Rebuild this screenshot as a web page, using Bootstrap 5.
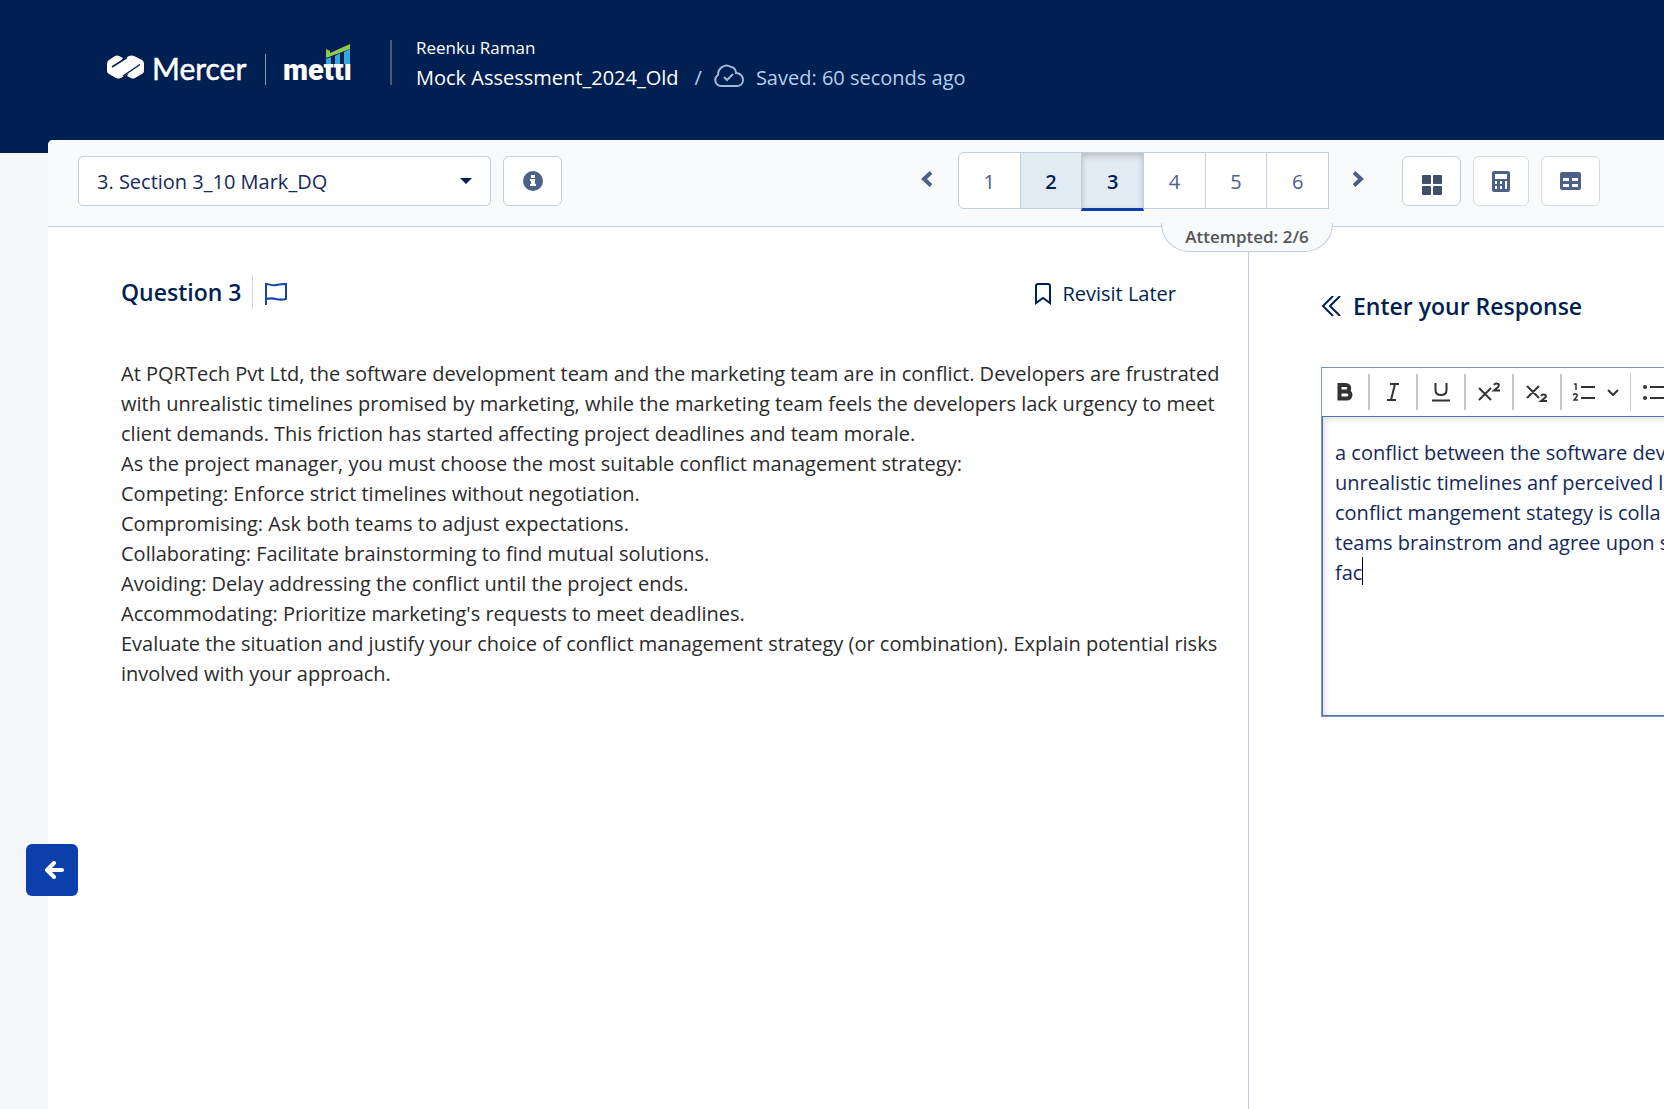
<!DOCTYPE html>
<html lang="en">
<head>
<meta charset="utf-8">
<meta name="viewport" content="width=device-width, initial-scale=1">
<title>Mock Assessment_2024_Old</title>
<link href="https://cdn.jsdelivr.net/npm/bootstrap@5.3.0/dist/css/bootstrap.min.css" rel="stylesheet">
<style>
  :root { --navy: #001f52; --line: #c0cedd; --slate: #4d6088; --royal: #0b3fab; }
  body { font-family: "Open Sans", "Noto Sans", sans-serif; font-size: 20px; line-height: 30px; color: var(--navy); background: #f4f6f8; overflow-x: hidden; }
  svg { display: block; flex: none; }
  .top-bar { background: var(--navy); height: 153px; padding: 36px 0 0 107px; }
  .brand-name { font-family: Lato, sans-serif; }
  .top-rule { width: 2px; height: 45px; background: #4a5873; margin: 4px 24px 0 37px; }
  .candidate { font-size: 17px; line-height: 24px; }
  .test-line { font-size: 20px; line-height: 30px; margin-top: 3px; }
  .pale { color: #b3cfee; }
  .sheet { margin: -13px 0 0 48px; min-height: calc(100vh - 140px); background: #fff; border-top-left-radius: 5px; position: relative; }
  .tool-row { height: 87px; padding: 12px 64px 0 30px; background: #f8fafc; border-bottom: 1px solid var(--line); border-top-left-radius: 5px; }
  .section-pick { appearance: none; width: 413px; height: 50px; margin: 4px 12px 0 0; padding: 2px 18px 0; font-size: 20px; color: #16295b; border: 1px solid var(--line); border-radius: 5px;
    background: #fff url("data:image/svg+xml,%3Csvg xmlns='http://www.w3.org/2000/svg' viewBox='0 0 12 6'%3E%3Cpath fill='%23001f52' d='M0 0h12L6 6z'/%3E%3C/svg%3E") no-repeat right 18px center / 12px 6px; }
  .tool-btn { width: 59px; height: 50px; margin-top: 4px; background: #fff; border: 1px solid #d5dbe3; border-radius: 6px; display: flex; align-items: center; justify-content: center; padding: 0; }
  .tool-btn.strong-line { border-color: var(--line); }
  .tool-btn.slim { width: 56px; }
  .step-btn { padding: 0; border: 0; height: 16px; margin-top: 19px; }
  .pager { width: 371px; margin: 0 24px 0 26px; height: 57px; }
  .pager .btn { --bs-btn-border-color: var(--line); --bs-btn-border-radius: 6px; flex: 1 1 0; padding: 2px 0 0; font-size: 20px; font-weight: 500; color: var(--slate); background: #fff; }
  .pager .btn.done { background: #e1ebf2; color: var(--navy); font-weight: 600; }
  .pager .btn.current { background: #e3ebf3; color: var(--navy); height: 59px; font-weight: 600; border-bottom: 3px solid var(--royal); box-shadow: inset 0 3px 6px #0003; }
  .tool-set { padding-left: 14px; }
  .tally { position: absolute; top: 71px; right: -4px; width: 172px; height: 29px; border: 1px solid var(--line); border-top: 0; border-radius: 0 0 28px 28px; background: #f8fafc; color: #555; font-size: 17px; font-weight: 600; line-height: 27px; text-align: center; z-index: 5; }
  .pane-question { padding: 48px 16px 0 73px; min-height: calc(100vh - 227px); border-right: 1px solid var(--line); }
  .pane-answer { flex: 0 0 415px; padding: 62px 0 0 72px; overflow: hidden; }
  .heading { font-size: 23px; font-weight: 600; line-height: 34px; margin: 0; }
  .head-rule { width: 1px; height: 34px; background: #d5d8dd; margin: 0 12px 0 11px; }
  .text-btn { font-size: 20px; line-height: 30px; color: var(--navy); padding: 4px 0 0; border: 0; }
  .revisit { margin-right: 56px; }
  .prompt { color: #2b2b2b; margin-top: 50px; }
  .prompt p { margin: 0; }
  .editor { width: 640px; margin-top: 44px; border: 1px solid #7f93b8; }
  .editor-tools { height: 48px; }
  .editor-tools button { height: 36px; width: 48px; padding: 0; border: 0; border-right: 2px solid #c8c8c8; background: none; display: flex; align-items: center; justify-content: center; color: #333; }
  .editor-tools button.wide { width: 69px; border-right-width: 1px; justify-content: flex-start; padding-left: 11px; }
  .editor textarea { display: block; width: 100%; height: 300px; padding: 21px 12px; border: 1px solid #4a76bb; outline: 0; resize: none; overflow: hidden; white-space: pre; font-size: 20px; line-height: 30px; color: #14295a; box-shadow: inset 2px 2px 6px #0002; }
  .caret { position: absolute; left: 40px; top: 141px; width: 1px; height: 28px; background: #000; }
  .back-btn { position: absolute; left: -22px; top: 704px; width: 52px; height: 52px; padding: 0 0 0 4px; border: 0; border-radius: 6px; background: var(--royal); display: flex; align-items: center; justify-content: center; }
</style>
<script src="https://cdn.jsdelivr.net/npm/bootstrap@5.3.0/dist/js/bootstrap.bundle.min.js"></script>
</head>
<body>
<header class="top-bar d-flex align-items-start text-white">
  <svg width="246" height="50" viewBox="0 0 246 50" role="img" aria-label="Mercer Mettl">
    <path fill="#fff" d="M0 28q0-3 2-4l6-4q2-1 4 0l4 2-2 3 8-5q3-1 5 0l8 4q2 1 2 4v7q0 2-2 3l-7 4q-2 1-4 0l-4-2 2-3-8 5q-3 1-5 0l-7-4q-2-1-2-3z"/>
    <path stroke="#001f52" stroke-width="1.500" fill="none" d="M5 31L20 21.500M16 40L33 28.500"/>
    <text class="brand-name" x="45" y="44" font-size="30" fill="#fff" stroke="#fff" stroke-width=".5">Mercer</text>
    <path stroke="#8796b4" d="M158.500 18v31"/>
    <text x="176" y="44" font-size="29" font-weight="900" fill="#fff" font-family="Roboto">mettl</text>
    <path fill="#001f52" d="M218 8h28v20h-28z"/>
    <path fill="#35a7df" d="M219 23l5-2v7h-5zM228 20l5-3v11h-5zM237 16l6-3v15h-6z"/>
    <path fill="#94c94f" d="M219 13l4 2v2l20-9v5l-24 9z"/>
  </svg>
  <div class="top-rule"></div>
  <div>
    <div class="candidate">Reenku Raman</div>
    <div class="test-line d-flex align-items-center">
      <span>Mock Assessment_2024_Old</span>
      <span class="pale ms-3 me-2">/</span>
      <svg class="ms-1 mb-1" width="30" height="24" viewBox="0 0 30 24" fill="none" stroke="#a3b7d3" stroke-width="2"><path d="M7 22a6 6 0 0 1-3-11C4 4 11-1 17 3c3 0 5 3 5 6 4 0 7 3 7 7s-3 6-6 6z"/><path d="M10 13l3 3 6-6"/></svg>
      <span class="pale ms-2 ps-1">Saved: 60 seconds ago</span>
    </div>
  </div>
</header>

<main class="sheet">
  <div class="tool-row d-flex align-items-start">
    <select class="section-pick" aria-label="Section"><option>3. Section 3_10 Mark_DQ</option></select>
    <button class="tool-btn strong-line" type="button" aria-label="Section information">
      <svg width="20" height="20" viewBox="0 0 20 20"><circle cx="10" cy="10" r="10" fill="#4d6088"/><path fill="#fff" d="M8 4h4v3H8zM7 8h5v5h1v2H7v-2h1v-3H7z"/></svg>
    </button>
    <nav class="d-flex ms-auto align-items-start position-relative" aria-label="Questions">
      <button class="btn step-btn" type="button" aria-label="Previous question"><svg width="11" height="16" viewBox="0 0 11 16" fill="none" stroke="#4d6088" stroke-width="4"><path d="M10 1.500L3 8l7 6.500"/></svg></button>
      <div class="pager btn-group position-relative">
        <button class="btn" type="button">1</button>
        <button class="btn done" type="button">2</button>
        <button class="btn current" type="button" aria-current="true">3</button>
        <button class="btn" type="button">4</button>
        <button class="btn" type="button">5</button>
        <button class="btn" type="button">6</button>
        <div class="tally">Attempted: 2/6</div>
      </div>
      <button class="btn step-btn" type="button" aria-label="Next question"><svg width="11" height="16" viewBox="0 0 11 16" fill="none" stroke="#4d6088" stroke-width="4"><path d="M1 1.500L8 8l-7 6.500"/></svg></button>
    </nav>
    <div class="tool-set d-flex gap-2 ms-4">
      <button class="tool-btn strong-line pt-2" type="button" aria-label="All questions"><svg width="20" height="20" viewBox="0 0 20 20" fill="#3e5068"><rect width="9" height="9" rx="1"/><rect x="11" width="9" height="9" rx="1"/><rect y="11" width="9" height="9" rx="1"/><rect x="11" y="11" width="9" height="9" rx="1"/></svg></button>
      <button class="tool-btn slim ms-1" type="button" aria-label="Calculator"><svg width="18" height="21" viewBox="0 0 18 21"><rect width="18" height="21" rx="2" fill="#4d6088"/><path fill="#fff" d="M3 3h12v5H3zM3 10h2v3H3zM8 10h2v3H8zM13 10h2v8h-2zM3 15h2v3H3zM8 15h2v3H8z"/></svg></button>
      <button class="tool-btn ms-1" type="button" aria-label="Spreadsheet"><svg width="21" height="18" viewBox="0 0 21 18"><rect width="21" height="18" rx="2" fill="#4d6088"/><path fill="#fff" d="M3 6h6v3H3zM12 6h6v3h-6zM3 12h6v3H3zM12 12h6v3h-6z"/></svg></button>
    </div>
  </div>

  <div class="d-flex">
    <section class="pane-question flex-fill">
      <div class="d-flex align-items-center">
        <h1 class="heading">Question 3</h1>
        <div class="head-rule"></div>
        <button class="btn text-btn" type="button" aria-label="Flag question"><svg width="22" height="22" viewBox="0 0 22 22" fill="none" stroke="#1746ab" stroke-width="2"><path d="M1 22V1c4 0 5 2 10 1s7-1 10-1v15c-4 1-6 1-10 0s-6-1-10 0"/></svg></button>
        <button class="btn text-btn revisit d-flex align-items-center ms-auto" type="button"><svg class="me-2" width="22" height="22" viewBox="0 0 22 22" fill="none" stroke="#001f52" stroke-width="2"><path d="M4 20V3q0-2 2-2h10q2 0 2 2v17l-7-5z"/></svg>Revisit Later</button>
      </div>
      <div class="prompt">
        <p>At PQRTech Pvt Ltd, the software development team and the marketing team are in conflict. Developers are frustrated with unrealistic timelines promised by marketing, while the marketing team feels the developers lack urgency to meet client demands. This friction has started affecting project deadlines and team morale.</p>
        <p>As the project manager, you must choose the most suitable conflict management strategy:</p>
        <p>Competing: Enforce strict timelines without negotiation.</p>
        <p>Compromising: Ask both teams to adjust expectations.</p>
        <p>Collaborating: Facilitate brainstorming to find mutual solutions.</p>
        <p>Avoiding: Delay addressing the conflict until the project ends.</p>
        <p>Accommodating: Prioritize marketing's requests to meet deadlines.</p>
        <p>Evaluate the situation and justify your choice of conflict management strategy (or combination). Explain potential risks involved with your approach.</p>
      </div>
    </section>

    <section class="pane-answer">
      <div class="d-flex align-items-center">
        <svg class="me-2" width="20" height="20" viewBox="0 0 20 20" fill="none" stroke="#001f52" stroke-width="2"><path d="M12 0L2 10l10 10M19 0L9 10l10 10"/></svg>
        <h2 class="heading ps-1"><label for="answer">Enter your Response</label></h2>
      </div>
      <div class="editor">
        <div class="editor-tools d-flex align-items-center">
          <button type="button" aria-label="Bold"><svg width="16" height="18" viewBox="0 0 16 18" fill="none" stroke="#333" stroke-width="4"><path d="M2.500 2h6.500a3 3 0 0 1 0 6.500H3h7a3.500 3.500 0 0 1 0 7H2.500z"/></svg></button>
          <button type="button" aria-label="Italic"><svg width="14" height="18" viewBox="0 0 14 18" fill="none" stroke="#333" stroke-width="2"><path d="M4 1h9M1 17h9M9 1L5 17"/></svg></button>
          <button type="button" aria-label="Underline"><svg width="18" height="20" viewBox="0 0 18 20" fill="none" stroke="#333" stroke-width="2"><path d="M3.500 1v7q0 5 5.500 5t5.500-5V1M0 18.500h18"/></svg></button>
          <button type="button" aria-label="Superscript"><svg width="22" height="20" viewBox="0 0 22 20" fill="none" stroke="#333" stroke-width="2"><path d="M1 6l12 12M13 6L1 18M16 3q1-2 3-1.500c3 .5 2 3 0 4.500l-3 2.500h6"/></svg></button>
          <button type="button" aria-label="Subscript"><svg width="22" height="20" viewBox="0 0 22 20" fill="none" stroke="#333" stroke-width="2"><path d="M1 4l12 12M13 4L1 16M15 14q1-2 3-1.500c3 .5 2 3 0 4l-3 2.500h6"/></svg></button>
          <button type="button" class="wide gap-2" aria-label="Numbered list"><svg width="22" height="20" viewBox="0 0 22 20" fill="none" stroke="#333" stroke-width="2"><path d="M8 5h14M8 16h14"/><path stroke-width="1.500" d="M1 2h2v6M0 13q2-2 4-.500c1 2-1 3-3 5.500h4"/></svg>
            <svg class="ms-1" width="12" height="7" viewBox="0 0 12 7" fill="none" stroke="#333" stroke-width="2"><path d="M1 1l5 5 5-5"/></svg></button>
          <button type="button" class="wide gap-2" aria-label="Bulleted list"><svg width="22" height="20" viewBox="0 0 22 20" fill="#333"><circle cx="3" cy="5" r="2"/><circle cx="3" cy="16" r="2"/><path d="M8 4h14v2H8zM8 15h14v2H8z"/></svg></button>
        </div>
        <div class="position-relative">
          <textarea id="answer" spellcheck="false">a conflict between the software dev
unrealistic timelines anf perceived la
conflict mangement stategy is colla
teams brainstrom and agree upon s
fac</textarea>
          <span class="caret"></span>
        </div>
      </div>
    </section>
  </div>
  <button class="back-btn" type="button" aria-label="Back"><svg width="20" height="18" viewBox="0 0 20 18" fill="none" stroke="#fff" stroke-width="4" stroke-linecap="round" stroke-linejoin="round"><path d="M10 2L3 9l7 7M3 9h15"/></svg></button>
</main>
</body>
</html>
